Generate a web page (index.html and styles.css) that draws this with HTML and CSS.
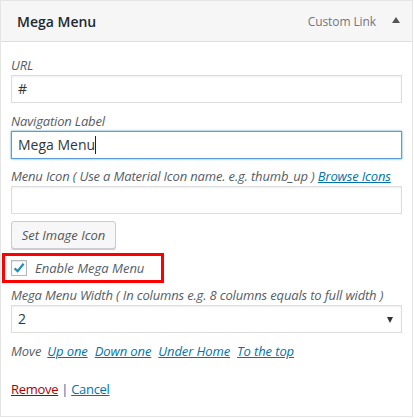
FILE: index.html
```html
<!DOCTYPE html>
<html>
<head>
<meta charset="utf-8">
<link rel="stylesheet" href="styles.css">
</head>
<body>
<div class="item">
  <div class="item-head">
    <span class="item-title">Mega Menu</span>
    <span class="item-controls">
      <span class="item-type">Custom Link</span>
      <span class="item-arrow"></span>
    </span>
  </div>
  <div class="item-body">
    <div class="field f-url">
      <div class="label">URL</div>
      <div class="input">#</div>
    </div>
    <div class="field f-nav">
      <div class="label">Navigation Label</div>
      <div class="input focus">Mega Menu<span class="caret"></span></div>
    </div>
    <div class="field f-icon">
      <div class="label">Menu Icon ( Use a Material Icon name. e.g. thumb_up ) <a class="link" href="#">Browse Icons</a></div>
      <div class="input"></div>
    </div>
    <button class="btn" type="button">Set Image Icon</button>
    <div class="check-row">
      <span class="checkbox">
        <svg width="14" height="14" viewBox="0 0 14 14"><path d="M2.6 7.4 L5.6 10.2 L11.6 2.8" fill="none" stroke="#1e8cbe" stroke-width="2.2"/></svg>
      </span>
      <span class="check-label">Enable Mega Menu</span>
    </div>
    <div class="field f-width">
      <div class="label">Mega Menu Width ( In columns e.g. 8 columns equals to full width )</div>
      <div class="input select">2<span class="sel-arrow"></span></div>
    </div>
    <div class="move">
      <span class="move-word">Move</span>
      <a class="link" href="#">Up one</a>
      <a class="link" href="#">Down one</a>
      <a class="link" href="#">Under Home</a>
      <a class="link" href="#">To the top</a>
    </div>
    <div class="actions">
      <a class="remove" href="#">Remove</a> <span class="sep">|</span> <a class="cancel" href="#">Cancel</a>
    </div>
  </div>
</div>
</body>
</html>
```
FILE: styles.css
```css
* { box-sizing: border-box; }
html, body { margin: 0; padding: 0; background: #fff; }
body { font-family: "Open Sans", "Noto Sans", sans-serif; font-size: 13px; color: #444; }

.item {
  width: 413px;
  height: 417px;
  border: 1px solid #e5e5e5;
  background: #fff;
}

.item-head {
  height: 41px;
  background: #f6f6f6;
  border-bottom: 1px solid #dfdfdf;
  display: flex;
  align-items: center;
  justify-content: space-between;
  padding: 0 12px 0 16px;
}
.item-title { font-size: 14px; font-weight: 600; color: #23282d; }
.item-controls { display: flex; align-items: center; }
.item-type { font-size: 12px; letter-spacing: -0.1px; color: #72777c; margin-right: 16px; }
.item-arrow {
  width: 0; height: 0;
  border-left: 4px solid transparent;
  border-right: 4px solid transparent;
  border-bottom: 6px solid #555;
  margin-top: -2px;
}

.item-body { padding: 14px 10px 0 10px; }

.label {
  font-style: italic;
  color: #555d66;
  line-height: 19px;
  white-space: nowrap;
  letter-spacing: -0.16px;
}
.field { margin-top: 9px; }
.f-url { margin-top: 0; }
.f-icon { margin-top: 8px; }
.f-width { margin-top: 3px; }

.input {
  height: 28px;
  border: 1px solid #ddd;
  box-shadow: inset 0 1px 2px rgba(0,0,0,.07);
  background: #fff;
  padding: 0 6px;
  font-size: 14px;
  color: #32373c;
  line-height: 26px;
  position: relative;
}
.input.focus {
  border-color: #5b9dd9;
  box-shadow: 0 0 2px rgba(30,140,190,.8);
}
.caret {
  display: inline-block;
  width: 1px;
  height: 18px;
  background: #222;
  vertical-align: -4px;
}
.select { padding-left: 6px; }
.sel-arrow {
  position: absolute;
  right: 8px;
  top: 11px;
  width: 0; height: 0;
  border-left: 3.5px solid transparent;
  border-right: 3.5px solid transparent;
  border-top: 6px solid #333;
}

.link { color: #0073aa; text-decoration: underline; }

.btn {
  display: block;
  margin-top: 7px;
  width: 105px;
  height: 28px;
  border: 1px solid #ccc;
  border-radius: 3px;
  background: #f7f7f7;
  box-shadow: 0 1px 0 #ccc;
  font-family: inherit;
  font-size: 13px;
  font-style: italic;
  color: #555;
  padding: 0;
}

.check-row {
  margin-top: 4px;
  margin-left: -9px;
  width: 162px;
  height: 30px;
  border: 3px solid #ff0000;
  display: flex;
  align-items: center;
  padding-left: 6px;
}
.checkbox {
  width: 16px; height: 16px;
  border: 1px solid #b4b9be;
  background: #fff;
  box-shadow: inset 0 1px 2px rgba(0,0,0,.1);
  display: flex;
  align-items: center;
  justify-content: center;
  flex: none;
}
.checkbox svg { display: block; }
.check-label { font-style: italic; color: #555d66; margin-left: 8px; }

.move {
  margin-top: 9px;
  line-height: 19px;
  display: flex;
  gap: 7px;
  font-style: italic;
  letter-spacing: -0.1px;
}
.move-word { color: #555d66; margin-right: -1px; }

.actions {
  margin-top: 19px;
  line-height: 19px;
  font-size: 13px;
  letter-spacing: -0.3px;
  color: #555;
}
.remove { color: #a00; text-decoration: underline; }
.cancel { color: #0073aa; text-decoration: underline; }
.sep { color: #0073aa; }
```
